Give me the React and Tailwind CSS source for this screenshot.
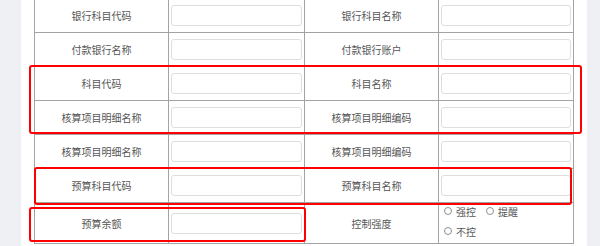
import React from 'react';

const rows = [
  ['银行科目代码', '银行科目名称'],
  ['付款银行名称', '付款银行账户'],
  ['科目代码', '科目名称'],
  ['核算项目明细名称', '核算项目明细编码'],
  ['核算项目明细名称', '核算项目明细编码'],
  ['预算科目代码', '预算科目名称'],
];

function Field() {
  return <div className="w-full h-[21px] rounded-[3px] border border-[#dedede] bg-white" />;
}

function Radio({ label }) {
  return (
    <label className="flex items-center gap-[4px]">
      <span className="w-[8px] h-[8px] rounded-full border border-[#8f8f8f] bg-white" />
      <span>{label}</span>
    </label>
  );
}

function Row({ left, right, last, children }) {
  return (
    <div
      className={`grid grid-cols-[134px_136px_134px_135px] border-b border-[#a3a3a3] ${
        last ? 'h-[41px]' : 'h-[34px]'
      }`}
    >
      <div className="flex items-center justify-center border-r border-[#a3a3a3]">{left}</div>
      <div className="flex items-center px-[2px] border-r border-[#a3a3a3]">
        <Field />
      </div>
      <div className="flex items-center justify-center border-r border-[#a3a3a3]">{right}</div>
      {children || (
        <div className="flex items-center px-[2px] border-r border-[#a3a3a3]">
          <Field />
        </div>
      )}
    </div>
  );
}

export default function App() {
  return (
    <div
      className="relative flex h-[246px] w-[600px] overflow-hidden bg-white text-[10px] text-[#555]"
      style={{ fontFamily: '"Noto Sans CJK SC", "Noto Sans", sans-serif' }}
    >
      <div className="w-[21px] bg-[#eff0f4]" />
      <div className="flex-1 px-[13px]">
        <div className="mt-[-2px] border-l border-t border-[#a3a3a3]">
          {rows.map(([l, r], i) => (
            <Row key={i} left={l} right={r} />
          ))}
          <Row left="预算余额" right="控制强度" last>
            <div className="flex flex-col gap-[4px] pl-[5px] border-r border-[#a3a3a3]">
              <div className="flex h-[16px] items-center gap-[10px]">
                <Radio label="强控" />
                <Radio label="提醒" />
              </div>
              <div className="flex h-[16px] items-center">
                <Radio label="不控" />
              </div>
            </div>
          </Row>
        </div>
      </div>
      <div className="w-[13px] bg-[#eff0f4]" />

      <div className="absolute left-[29px] top-[65px] w-[553px] h-[69px] rounded-[3px] border-2 border-[#f00]" />
      <div className="absolute left-[34px] top-[167px] w-[538px] h-[38px] rounded-[3px] border-2 border-[#f00]" />
      <div className="absolute left-[29px] top-[207px] w-[277px] h-[35px] rounded-[3px] border-2 border-[#f00]" />
    </div>
  );
}
